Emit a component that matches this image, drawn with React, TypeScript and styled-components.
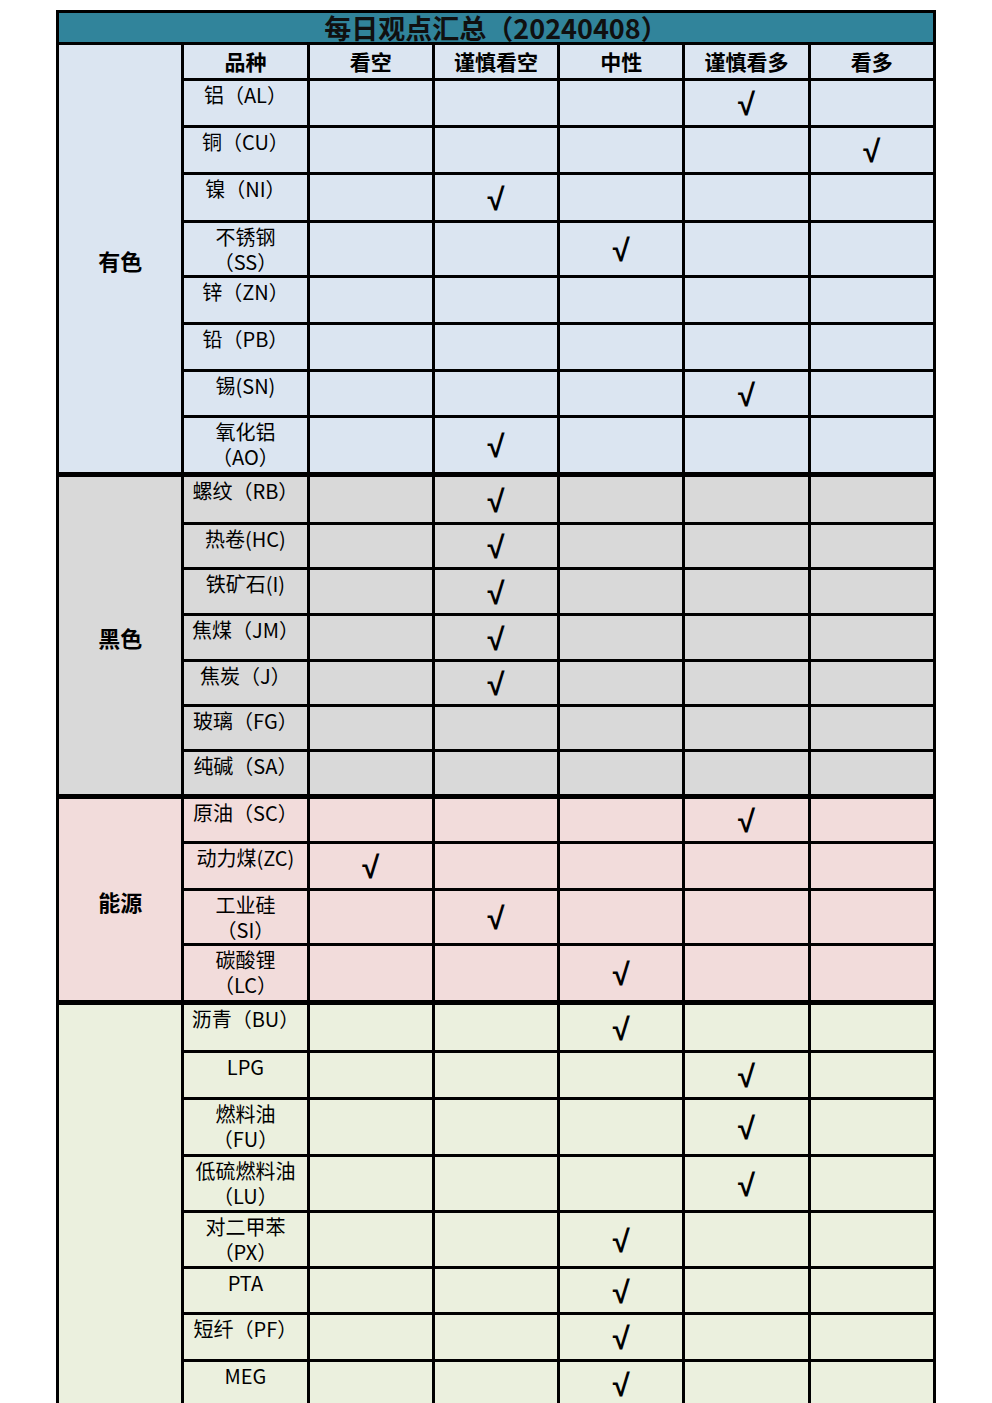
import React from "react";
import styled, { createGlobalStyle } from "styled-components";

const GlobalStyle = createGlobalStyle`
  html, body { margin: 0; padding: 0; background: #ffffff; }
  body { font-family: "Noto Sans CJK SC", "Noto Sans", sans-serif; color: #000; }
`;

const Page = styled.div`
  height: 1403px;
  overflow: hidden;
  padding-top: 10px;
  box-sizing: border-box;
  display: flex;
  justify-content: center;
  align-items: flex-start;
`;

const Sheet = styled.div<{ $rows: string }>`
  width: 880px;
  box-sizing: border-box;
  padding: 3px;
  background: #000;
  display: grid;
  grid-template-columns: repeat(7, minmax(0, 1fr));
  grid-template-rows: ${(p) => p.$rows};
  gap: 3px;
`;

const Title = styled.div`
  grid-column: 1 / -1;
  background: #31849b;
  color: #101010;
  font-size: 27px;
  font-weight: 700;
  line-height: 29px;
  text-align: center;
  white-space: nowrap;
`;

const GroupCell = styled.div<{ $span: number; $bg: string; $thick: boolean }>`
  grid-column: 1;
  grid-row: span ${(p) => p.$span};
  background: ${(p) => p.$bg};
  border-top: ${(p) => (p.$thick ? "2px solid #000" : "0")};
  display: flex;
  align-items: center;
  justify-content: center;
  font-size: 22px;
  font-weight: 700;
  padding-top: 2px;
`;

const HeadCell = styled.div`
  background: #dbe5f1;
  font-size: 21px;
  font-weight: 700;
  line-height: 33px;
  text-align: center;
  white-space: nowrap;
`;

const NameCell = styled.div<{ $bg: string; $thick: boolean }>`
  background: ${(p) => p.$bg};
  border-top: ${(p) => (p.$thick ? "2px solid #000" : "0")};
  font-size: 20px;
  line-height: 25px;
  padding-top: 1px;
  text-align: center;
  white-space: pre-line;
  overflow: hidden;
`;

const MarkCell = styled.div<{ $bg: string; $thick: boolean }>`
  background: ${(p) => p.$bg};
  border-top: ${(p) => (p.$thick ? "2px solid #000" : "0")};
  display: flex;
  align-items: center;
  justify-content: center;
  font-family: "Liberation Sans", Arial, sans-serif;
  font-size: 31px;
  font-weight: 700;
  line-height: 1;
  padding-top: 3px;
`;

type Item = { name: string; h: number; pick?: number };
type Group = { label: string; bg: string; items: Item[] };

const groups: Group[] = [
  {
    label: "有色",
    bg: "#dbe5f1",
    items: [
      { name: "铝（AL）", h: 44, pick: 3 },
      { name: "铜（CU）", h: 44, pick: 4 },
      { name: "镍（NI）", h: 45, pick: 1 },
      { name: "不锈钢\n（SS）", h: 52, pick: 2 },
      { name: "锌（ZN）", h: 44 },
      { name: "铅（PB）", h: 44 },
      { name: "锡(SN)", h: 43, pick: 3 },
      { name: "氧化铝\n（AO）", h: 54, pick: 1 },
    ],
  },
  {
    label: "黑色",
    bg: "#d9d9d9",
    items: [
      { name: "螺纹（RB）", h: 47, pick: 1 },
      { name: "热卷(HC)", h: 42, pick: 1 },
      { name: "铁矿石(I)", h: 43, pick: 1 },
      { name: "焦煤（JM）", h: 43, pick: 1 },
      { name: "焦炭（J）", h: 42, pick: 1 },
      { name: "玻璃（FG）", h: 42 },
      { name: "纯碱（SA）", h: 42 },
    ],
  },
  {
    label: "能源",
    bg: "#f2dcdb",
    items: [
      { name: "原油（SC）", h: 44, pick: 3 },
      { name: "动力煤(ZC)", h: 44, pick: 0 },
      { name: "工业硅\n（SI）", h: 52, pick: 1 },
      { name: "碳酸锂\n（LC）", h: 54, pick: 2 },
    ],
  },
  {
    label: "化工",
    bg: "#ebf0de",
    items: [
      { name: "沥青（BU）", h: 47, pick: 2 },
      { name: "LPG", h: 44, pick: 3 },
      { name: "燃料油\n（FU）", h: 54, pick: 3 },
      { name: "低硫燃料油\n（LU）", h: 53, pick: 3 },
      { name: "对二甲苯\n（PX）", h: 53, pick: 2 },
      { name: "PTA", h: 43, pick: 2 },
      { name: "短纤（PF）", h: 44, pick: 2 },
      { name: "MEG", h: 44, pick: 2 },
      { name: "苯乙烯（EB）", h: 44 },
      { name: "PVC", h: 44 },
      { name: "塑料（L）", h: 44 },
      { name: "PP", h: 44 },
      { name: "甲醇（MA）", h: 44 },
      { name: "尿素（UR）", h: 44 },
      { name: "橡胶（RU）", h: 44 },
      { name: "20号胶（NR）", h: 44 },
      { name: "纸浆（SP）", h: 44 },
      { name: "烧碱（SH）", h: 44 },
    ],
  },
];

const headers = ["品种", "看空", "谨慎看空", "中性", "谨慎看多", "看多"];

export default function App() {
  const rowHeights: number[] = [29, 33];
  groups.forEach((g) => g.items.forEach((it) => rowHeights.push(it.h)));
  const rows = rowHeights.map((h) => `${h}px`).join(" ");

  return (
    <>
      <GlobalStyle />
      <Page>
        <Sheet $rows={rows}>
          <Title>每日观点汇总（20240408）</Title>
          {groups.map((g, gi) => (
            <React.Fragment key={g.label}>
              <GroupCell
                $span={g.items.length + (gi === 0 ? 1 : 0)}
                $bg={g.bg}
                $thick={gi > 0}
              >
                {g.label}
              </GroupCell>
              {gi === 0 &&
                headers.map((h) => <HeadCell key={h}>{h}</HeadCell>)}
              {g.items.map((it, ii) => {
                const thick = gi > 0 && ii === 0;
                return (
                  <React.Fragment key={it.name}>
                    <NameCell $bg={g.bg} $thick={thick}>
                      {it.name}
                    </NameCell>
                    {[0, 1, 2, 3, 4].map((c) => (
                      <MarkCell key={c} $bg={g.bg} $thick={thick}>
                        {it.pick === c ? "√" : ""}
                      </MarkCell>
                    ))}
                  </React.Fragment>
                );
              })}
            </React.Fragment>
          ))}
        </Sheet>
      </Page>
    </>
  );
}
